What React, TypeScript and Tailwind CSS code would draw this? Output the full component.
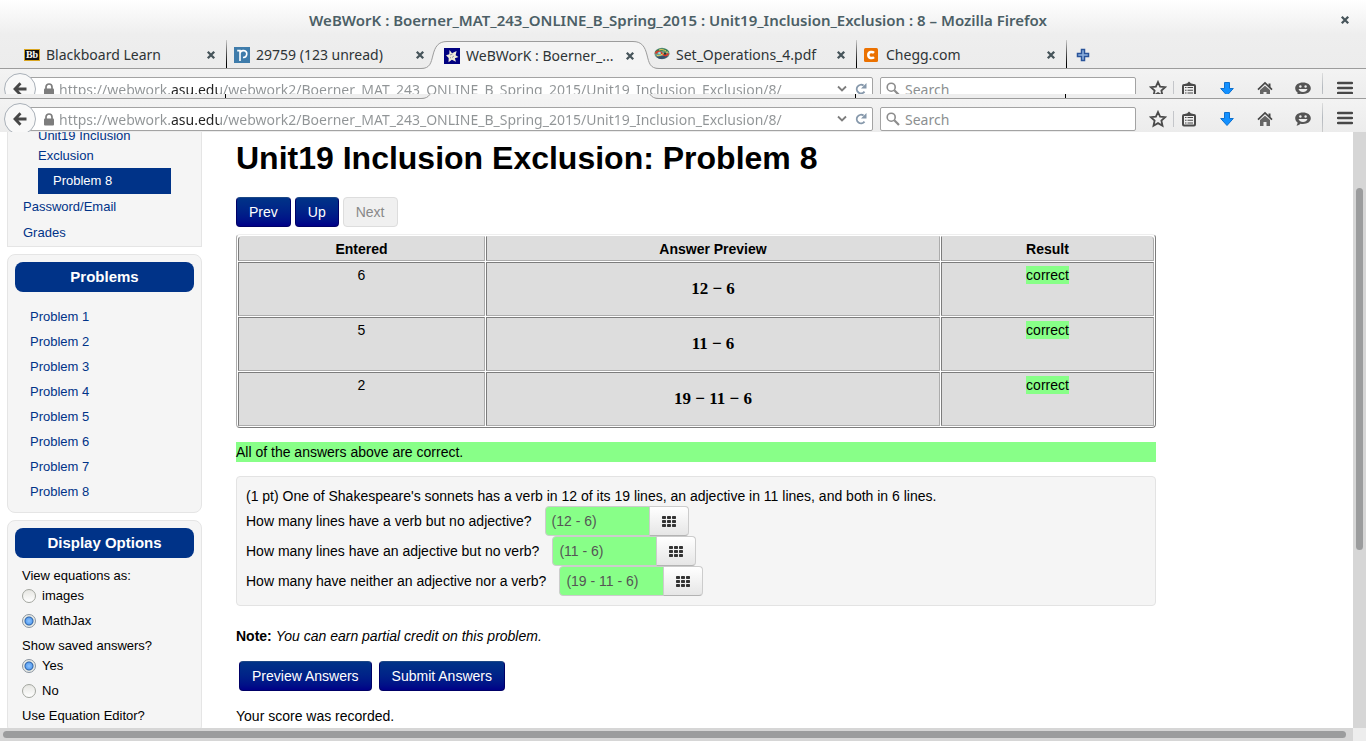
import React from "react";

const problems = [1, 2, 3, 4, 5, 6, 7, 8];

const results = [
  { entered: "6", preview: "12 − 6" },
  { entered: "5", preview: "11 − 6" },
  { entered: "2", preview: "19 − 11 − 6" },
];

const questions = [
  { text: "How many lines have a verb but no adjective?", value: "(12 - 6)" },
  { text: "How many lines have an adjective but no verb?", value: "(11 - 6)" },
  { text: "How many have neither an adjective nor a verb?", value: "(19 - 11 - 6)" },
];

function CloseIcon() {
  return (
    <svg width="10" height="10" viewBox="0 0 10 10" aria-hidden="true">
      <path d="M1.8 1.8 8.2 8.2M8.2 1.8 1.8 8.2" stroke="#46545a" strokeWidth="2.3" />
    </svg>
  );
}

function BlackboardIcon() {
  return (
    <span className="flex h-3 w-4 items-center justify-center border border-[#d9a520] bg-[#111] font-['Liberation_Serif',serif] text-[10px] leading-none font-bold text-white">
      Bb
    </span>
  );
}

function PiazzaIcon() {
  return (
    <svg width="16" height="16" viewBox="0 0 16 16" aria-hidden="true">
      <rect width="16" height="16" fill="#3f7cab" />
      <path d="M6 14V6.500a3.400 3.400 0 1 1 3 3.900M3.200 3.600h2.800v3" fill="none" stroke="#fff" strokeWidth="1.600" />
    </svg>
  );
}

function WebworkIcon() {
  return (
    <svg width="16" height="16" viewBox="0 0 16 16" aria-hidden="true">
      <rect width="16" height="16" fill="#000080" />
      <path d="M5.5 2 8 5.2 12.6 3l-1 4.2L14.5 9l-3.6 1.3 1 3.4-4-2-3.4 2.6.2-4.4L2 7.3l3.3-1z" fill="#eeead8" />
      <path d="m6 7 2.500-1M8 9.500l2-1.500M6 10l1-.5" fill="none" stroke="#6a6a90" strokeWidth=".7" />
    </svg>
  );
}

function GlobeIcon() {
  return (
    <svg width="16" height="16" viewBox="0 0 16 16" aria-hidden="true">
      <ellipse cx="8" cy="6.5" rx="7.6" ry="5.8" fill="#6f9a86" />
      <path d="M1 5C3 1 12 0 15 5L9 4z" fill="#2d7a54" />
      <path d="M2 9.500C5 13 11 13 14 9L8 9z" fill="#35506e" />
      <path d="M1.500 6.500c2-3 5-2 6.500 0s4.500 3 6.500 0" fill="none" stroke="#d63a2c" strokeWidth="2" />
      <path d="M3 8.500c3 1.500 7-3.500 11-3.500M5 3c3-1 5 0 7 1" fill="none" stroke="#f2d660" strokeWidth="1" />
      <circle cx="5.500" cy="6" r="1.300" fill="#8fe0ea" />
      <circle cx="11" cy="6.500" r="1.200" fill="#173a3a" />
    </svg>
  );
}

function CheggIcon() {
  return (
    <svg width="14" height="14" viewBox="0 0 14 14" aria-hidden="true">
      <rect width="14" height="14" rx="1.500" fill="#eb7100" />
      <path d="M10 4.800C8.600 3.500 4.300 3.400 4.300 7s4.300 3.500 5.700 2.200" fill="none" stroke="#fff" strokeWidth="2.500" />
    </svg>
  );
}

type Tab = { title: string; icon: React.ReactNode; active?: boolean; divider?: boolean };

const tabs: Tab[] = [
  { title: "Blackboard Learn", icon: <BlackboardIcon />, divider: true },
  { title: "29759 (123 unread)", icon: <PiazzaIcon /> },
  { title: "WeBWorK : Boerner_...", icon: <WebworkIcon />, active: true },
  { title: "Set_Operations_4.pdf", icon: <GlobeIcon />, divider: true },
  { title: "Chegg.com", icon: <CheggIcon />, divider: true },
];

function ActiveTabShape() {
  return (
    <svg className="absolute bottom-0 -left-3.5 z-0" width="238" height="28" viewBox="0 0 238 28" aria-hidden="true">
      <path
        d="M0 28V27.500C9 27.500 10 22 12 14S17 .5 26 .5H212C221 .5 224 6 226 14S229 27.500 238 27.500V28Z"
        fill="#f4f4f4"
      />
      <path
        d="M0 27.500C9 27.500 10 22 12 14S17 .5 26 .5H212C221 .5 224 6 226 14S229 27.500 238 27.500"
        fill="none"
        stroke="#9c9c9c"
      />
    </svg>
  );
}

function TabBar() {
  return (
    <div className="flex h-[29px] shrink-0">
      <div className="w-[15px] border-b border-[#9c9c9c]" />
      {tabs.map((tab) => (
        <div
          key={tab.title}
          className={
            tab.active
              ? "relative flex w-[210px]"
              : "flex w-[210px] border-b border-[#9c9c9c]"
          }
        >
          {tab.active && <ActiveTabShape />}
          <div className="relative z-10 flex min-w-0 flex-1 items-center pt-0.5 pr-[10px] pl-[9px]">
            <span className="flex w-4 shrink-0">{tab.icon}</span>
            <button className="ml-1.5 min-w-0 flex-1 overflow-hidden text-left text-[14px] leading-5 whitespace-nowrap text-[#2e3436]">
              {tab.title}
            </button>
            <button aria-label={"Close " + tab.title} className="shrink-0">
              <CloseIcon />
            </button>
          </div>
          {tab.divider && <span className="-mr-px -ml-px w-px shrink-0 translate-x-px bg-linear-to-b from-[#ccc] to-black" />}
        </div>
      ))}
      <div className="flex flex-1 items-center border-b border-[#9c9c9c] pt-0.5 pl-[11px]">
        <button aria-label="New tab">
          <svg width="14" height="14" viewBox="0 0 14 14" aria-hidden="true">
            <path d="M5.500 1.500h3v4h4v3h-4v4h-3v-4h-4v-3h4z" fill="#8fb2df" stroke="#2a549a" strokeWidth="1.500" />
          </svg>
        </button>
      </div>
    </div>
  );
}

/* The lower rim of the tab bar, repeated between the two toolbars. */
function TabRim() {
  return (
    <div className="flex h-[5px] shrink-0 overflow-hidden bg-[#eee]">
      <div className="w-[15px] border-b border-[#9c9c9c]" />
      {tabs.map((tab) => (
        <div
          key={tab.title}
          className={
            tab.active
              ? "relative w-[210px]"
              : "flex w-[210px] justify-end border-b border-[#9c9c9c]"
          }
        >
          {tab.active && <ActiveTabShape />}
          {tab.divider && <span className="-mr-px w-px bg-black" />}
        </div>
      ))}
      <div className="flex-1 border-b border-[#9c9c9c]" />
    </div>
  );
}

function Toolbar() {
  return (
    <div className="flex h-[33px] items-start overflow-hidden bg-linear-to-b from-[#f3f3f3] to-[#ececec] pl-1">
      <button
        aria-label="Back"
        className="z-10 mt-1 flex size-8 shrink-0 items-center justify-center rounded-full border border-[#a9b0b8] bg-[#f8f8f8]"
      >
        <svg width="14" height="14" viewBox="0 0 14 14" aria-hidden="true">
          <path d="M7.500 1.300 2 7l5.500 5.700M2.500 7H13.500" fill="none" stroke="#474747" strokeWidth="2.800" />
        </svg>
      </button>
      <div className="mt-2 -ml-4 flex h-6 min-w-0 flex-1 items-center rounded-xs border border-[#a3a3a3] bg-white pl-[22px]">
        <svg width="12" height="13" viewBox="0 0 12 13" className="shrink-0" aria-hidden="true">
          <rect x="1" y="5.500" width="10" height="7" rx="1" fill="#7d7d7d" />
          <path d="M3 6V4a3 3 0 0 1 6 0v2" fill="none" stroke="#7d7d7d" strokeWidth="1.700" />
        </svg>
        <input
          aria-label="Address"
          defaultValue="https://webwork.asu.edu/webwork2/Boerner_MAT_243_ONLINE_B_Spring_2015/Unit19_Inclusion_Exclusion/8/"
          className="ml-1 h-5 min-w-0 flex-1 bg-[linear-gradient(to_right,#909496_112px,#222_112px,#222_160px,#909496_160px)] bg-clip-text text-[14px] text-transparent outline-none"
        />
        <svg width="10" height="10" viewBox="0 0 10 10" className="mr-2 shrink-0" aria-hidden="true">
          <path d="m1 2.500 4 4 4-4" fill="none" stroke="#7d7d7d" strokeWidth="1.800" />
        </svg>
        <svg width="12" height="12" viewBox="0 0 12 12" className="mr-[5px] shrink-0" aria-hidden="true">
          <path d="M9.500 8.700A4.300 4.300 0 1 1 8.600 2.600" fill="none" stroke="#8698ab" strokeWidth="1.900" />
          <path d="M11.500 0v5.500H6z" fill="#8698ab" />
        </svg>
      </div>
      <div className="mt-2 ml-[7px] flex h-6 w-64 shrink-0 items-center rounded-xs border border-[#a3a3a3] bg-white pl-[5px]">
        <svg width="14" height="14" viewBox="0 0 14 14" className="shrink-0" aria-hidden="true">
          <circle cx="5.200" cy="5.200" r="4" fill="none" stroke="#8c8c8c" strokeWidth="1.600" />
          <path d="m8.300 8.300 4.700 4.700" stroke="#8c8c8c" strokeWidth="2.200" />
        </svg>
        <input
          aria-label="Search the web"
          placeholder="Search"
          className="ml-[5px] h-5 min-w-0 flex-1 text-[14px] placeholder:text-[#8c8f91] outline-none"
        />
      </div>
      <div className="flex h-full w-[230px] shrink-0 pl-[7px]">
        <button aria-label="Bookmark" className="flex w-[30px] items-center justify-center pt-1.5">
          <svg width="18" height="18" viewBox="0 0 18 18" aria-hidden="true">
            <path d="m9 2 2.100 4.700 5.100.5-3.800 3.400 1.100 5.100L9 13.100l-4.500 2.600 1.100-5.100L1.800 7.200l5.100-.5z" fill="none" stroke="#4a4a4a" strokeWidth="1.800" />
          </svg>
        </button>
        <span className="mt-3 h-4 w-px bg-[#c4c6ca]" />
        <button aria-label="Bookmarks list" className="mr-1 flex w-[30px] items-center justify-center pt-1.5">
          <svg width="16" height="16" viewBox="0 0 16 16" aria-hidden="true">
            <path d="M4.500 4V2.500H6L8 .5l2 2h1.500V4z" fill="#4a4a4a" />
            <rect x="2" y="4" width="12" height="10.500" rx="1" fill="#eee" stroke="#4a4a4a" strokeWidth="2" />
            <path d="M4 6.500h1.500M4 9.300h1.500M4 12h1.500M6.500 6.500H12M6.500 9.300H12M6.500 12H12" stroke="#4a4a4a" strokeWidth="1.100" />
          </svg>
        </button>
        <button aria-label="Downloads" className="flex w-[38px] items-center justify-center pt-1.5">
          <svg width="16" height="16" viewBox="0 0 16 16" aria-hidden="true">
            <path d="M5.500 1.500h5v6h3.800L8 14.500 1.700 7.500h3.800z" fill="#1290ff" stroke="#0c70cf" />
          </svg>
        </button>
        <button aria-label="Home" className="flex w-[38px] items-center justify-center pt-1.5">
          <svg width="16" height="16" viewBox="0 0 16 16" aria-hidden="true">
            <path d="M1 8.600 8 2l7 6.600" fill="none" stroke="#474747" strokeWidth="1.700" />
            <path d="M3 9 8 4.700 13 9v6H9.500v-4h-3v4H3z" fill="#666" />
            <path d="M11.500 2.500h2v4l-2-2z" fill="#474747" />
          </svg>
        </button>
        <button aria-label="Chat" className="flex w-[38px] items-center justify-center pt-1.5">
          <svg width="16" height="16" viewBox="0 0 16 16" aria-hidden="true">
            <path d="M8 1.500c4.500 0 7.800 2.400 7.800 5.800S12.500 13 8 13c-.9 0-1.800-.1-2.600-.3-1 1.200-2.300 1.800-3.900 1.900.8-.9 1.100-1.900 1.100-3C1.200 10.500.2 9 .2 7.300.2 3.900 3.500 1.500 8 1.500z" fill="#555" />
            <circle cx="5.400" cy="5.500" r="1.200" fill="#eee" />
            <circle cx="10.600" cy="5.500" r="1.200" fill="#eee" />
            <path d="M3.500 8h9c-.7 2-2.300 3-4.500 3s-3.800-1-4.500-3z" fill="#eee" />
          </svg>
        </button>
        <span className="mr-px mt-1 w-px bg-linear-to-b from-[#ddd] via-[#b4b9bf] to-[#ccc]" />
        <button aria-label="Menu" className="flex flex-1 items-center justify-center pt-1">
          <svg width="16" height="14" viewBox="0 0 16 14" aria-hidden="true">
            <path d="M1 2h14M1 7h14M1 12h14" stroke="#474747" strokeWidth="2.400" strokeLinecap="round" />
          </svg>
        </button>
      </div>
    </div>
  );
}

function PanelTitle({ children }: { children: React.ReactNode }) {
  return (
    <h2 className="rounded-lg bg-[#003388] text-center text-[15px] leading-[30px] font-bold text-white">
      {children}
    </h2>
  );
}

function Option({ name, label, checked }: { name: string; label: string; checked?: boolean }) {
  return (
    <label className="flex h-[25px] items-start">
      <input
        type="radio"
        name={name}
        defaultChecked={checked}
        className="mt-[3px] mr-1.5 size-3.5 shrink-0 appearance-none rounded-full border border-[#a3a69f] bg-linear-to-b from-[#e6e6e2] to-white checked:border-[#8a94a0] checked:bg-[radial-gradient(circle,#8fc4ff_0,#5fa4f2_3px,#2f62a8_4px,#e9ece6_5px)]"
      />
      <span className="leading-5">{label}</span>
    </label>
  );
}

function Sidebar() {
  return (
    <aside className="ml-[7px] flex w-[195px] shrink-0 flex-col gap-[7px] text-[13px] leading-5">
      <nav className="border border-t-0 border-[#e5e5e5] bg-[#f5f5f5] pr-[30px] pl-[15px] text-[#003388]">
        <a href="#unit" className="-mt-1.5 ml-[15px] block">
          Unit19 Inclusion Exclusion
        </a>
        <a href="#problem" className="mt-0.5 ml-[15px] block bg-[#003388] pl-[15px] leading-[26px] text-white">
          Problem 8
        </a>
        <a href="#password" className="block leading-[26px]">
          Password/Email
        </a>
        <a href="#grades" className="block leading-[26px]">
          Grades
        </a>
      </nav>
      <nav className="rounded-lg border border-[#e5e5e5] bg-[#f5f5f5] p-[7px] pb-2">
        <PanelTitle>Problems</PanelTitle>
        <ul className="mt-3 pl-[15px] leading-[25px] text-[#003388]">
          {problems.map((n) => (
            <li key={n}>
              <a href={"#problem" + n}>Problem {n}</a>
            </li>
          ))}
        </ul>
      </nav>
      <section className="rounded-lg border border-[#e5e5e5] bg-[#f5f5f5] p-[7px]">
        <PanelTitle>Display Options</PanelTitle>
        <form className="mt-2 pl-[7px]">
          <fieldset>
            <legend>View equations as:</legend>
            <Option name="equations" label="images" />
            <Option name="equations" label="MathJax" checked />
          </fieldset>
          <fieldset>
            <legend>Show saved answers?</legend>
            <Option name="saved" label="Yes" checked />
            <Option name="saved" label="No" />
          </fieldset>
          <fieldset>
            <legend>Use Equation Editor?</legend>
          </fieldset>
        </form>
      </section>
    </aside>
  );
}

const primary =
  "h-[30px] rounded-sm border border-[#000066] border-t-[#1c4785] bg-linear-to-b from-[#003388] to-[#000088] px-3 text-white";

const cell = "border border-t-[#7c7c7c] border-r-[#acacac] border-b-[#acacac] border-l-[#7c7c7c] bg-[#ddd]";
const headCell = "border border-t-[#ddd] border-r-[#acacac] border-b-[#acacac] border-l-[#7c7c7c] bg-[#ddd] leading-[22px]";

function Content() {
  return (
    <main className="ml-[34px] min-w-0 flex-1 pt-[7px] text-[14px] leading-5">
      <div className="max-w-[920px]">
        <h1 className="text-[32px] leading-[38px] font-bold">Unit19 Inclusion Exclusion: Problem 8</h1>
        <div className="mt-5 flex gap-1">
          <button className={primary}>Prev</button>
          <button className={primary}>Up</button>
          <button disabled className="h-[30px] rounded-sm border border-[#ddd] bg-[#f0f0f0] px-3 text-[#888]">
            Next
          </button>
        </div>
        <table className="mt-[7px] w-full table-fixed border-separate border-spacing-px rounded-sm border border-t-[#eee] border-r-[#7c7c7c] border-b-[#7c7c7c] border-l-[#acacac] text-center">
          <colgroup>
            <col className="w-[247px]" />
            <col />
            <col className="w-[213px]" />
          </colgroup>
          <thead>
            <tr className="h-[25px]">
              <th className={headCell + " rounded-tl-sm"}>Entered</th>
              <th className={headCell}>Answer Preview</th>
              <th className={headCell + " rounded-tr-sm"}>Result</th>
            </tr>
          </thead>
          <tbody>
            {results.map((r) => (
              <tr key={r.preview} className="h-[54px]">
                <td className={cell + " pt-0.5 align-top"}>{r.entered}</td>
                <td className={cell + " font-['Liberation_Serif',serif] text-[17px] font-bold"}>{r.preview}</td>
                <td className={cell + " pt-0.5 align-top"}>
                  <span className="bg-[#88ff88] py-px">correct</span>
                </td>
              </tr>
            ))}
          </tbody>
        </table>
        <p className="mt-3.5 bg-[#88ff88]">All of the answers above are correct.</p>
        <section className="mt-3.5 rounded-sm border border-[#e3e3e3] bg-[#f5f5f5] px-[9px] py-[9px]">
          <p>
            (1 pt) One of Shakespeare&apos;s sonnets has a verb in 12 of its 19 lines, an adjective in 11 lines, and both
            in 6 lines.
          </p>
          {questions.map((q) => (
            <div key={q.text} className="flex h-[30px] items-center">
              <label className="flex items-center">
                <span>{q.text}</span>
                <input
                  defaultValue={q.value}
                  className="ml-[13px] h-[30px] w-[105px] rounded-l-sm border border-[#ccc] bg-[#88ff88] px-1.5 text-[#555] outline-none"
                />
              </label>
              <button
                aria-label="Open equation editor"
                className="-ml-px flex h-[30px] w-10 items-center justify-center rounded-r-sm border border-[#ccc] border-b-[#b3b3b3] bg-linear-to-b from-white to-[#e6e6e6]"
              >
                <svg width="14" height="11" viewBox="0 0 14 11" aria-hidden="true" fill="#333">
                  {[0, 5, 10].map((x) =>
                    [0, 4, 8].map((y) => <rect key={x + "-" + y} x={x} y={y} width="4" height="3" rx=".7" />)
                  )}
                </svg>
              </button>
            </div>
          ))}
        </section>
        <p className="mt-5">
          <b>Note:</b> <i>You can earn partial credit on this problem.</i>
        </p>
        <div className="mt-[15px] flex gap-[7px] pl-[3px]">
          <button className={primary}>Preview Answers</button>
          <button className={primary}>Submit Answers</button>
        </div>
        <p className="mt-[15px]">Your score was recorded.</p>
      </div>
    </main>
  );
}

export default function App() {
  return (
    <div className="flex h-screen flex-col overflow-hidden bg-white font-['Liberation_Sans',sans-serif] text-black">
      <header className="flex shrink-0 flex-col font-['Noto_Sans',sans-serif]">
        <div className="bg-linear-to-b from-white via-[#eee] to-[#ececec]">
          <div className="flex h-10 items-center pr-4">
            <span className="flex-1 pl-4 text-center text-[15px] font-semibold text-[#4c5f66]">
              WeBWorK : Boerner_MAT_243_ONLINE_B_Spring_2015 : Unit19_Inclusion_Exclusion : 8 – Mozilla Firefox
            </span>
            <button aria-label="Close window">
              <CloseIcon />
            </button>
          </div>
          <TabBar />
        </div>
        <div className="h-[25px] overflow-hidden">
          <Toolbar />
        </div>
        <TabRim />
        <Toolbar />
      </header>
      <div className="flex min-h-0 flex-1">
        <div className="flex min-w-0 flex-1 overflow-hidden">
          <Sidebar />
          <Content />
        </div>
        <div className="flex w-[13px] shrink-0 flex-col items-center bg-[#d6d6d6] pt-14">
          <span className="h-[67%] w-[7px] rounded-full bg-[#9b9c9d]" />
        </div>
      </div>
      <div className="flex h-[13px] shrink-0">
        <div className="flex flex-1 items-center bg-[#d6d6d6] pr-[7px] pl-[3px]">
          <span className="h-[7px] flex-1 rounded-full bg-[#9b9c9d]" />
        </div>
        <div className="w-[13px] bg-[#ededed]" />
      </div>
    </div>
  );
}
